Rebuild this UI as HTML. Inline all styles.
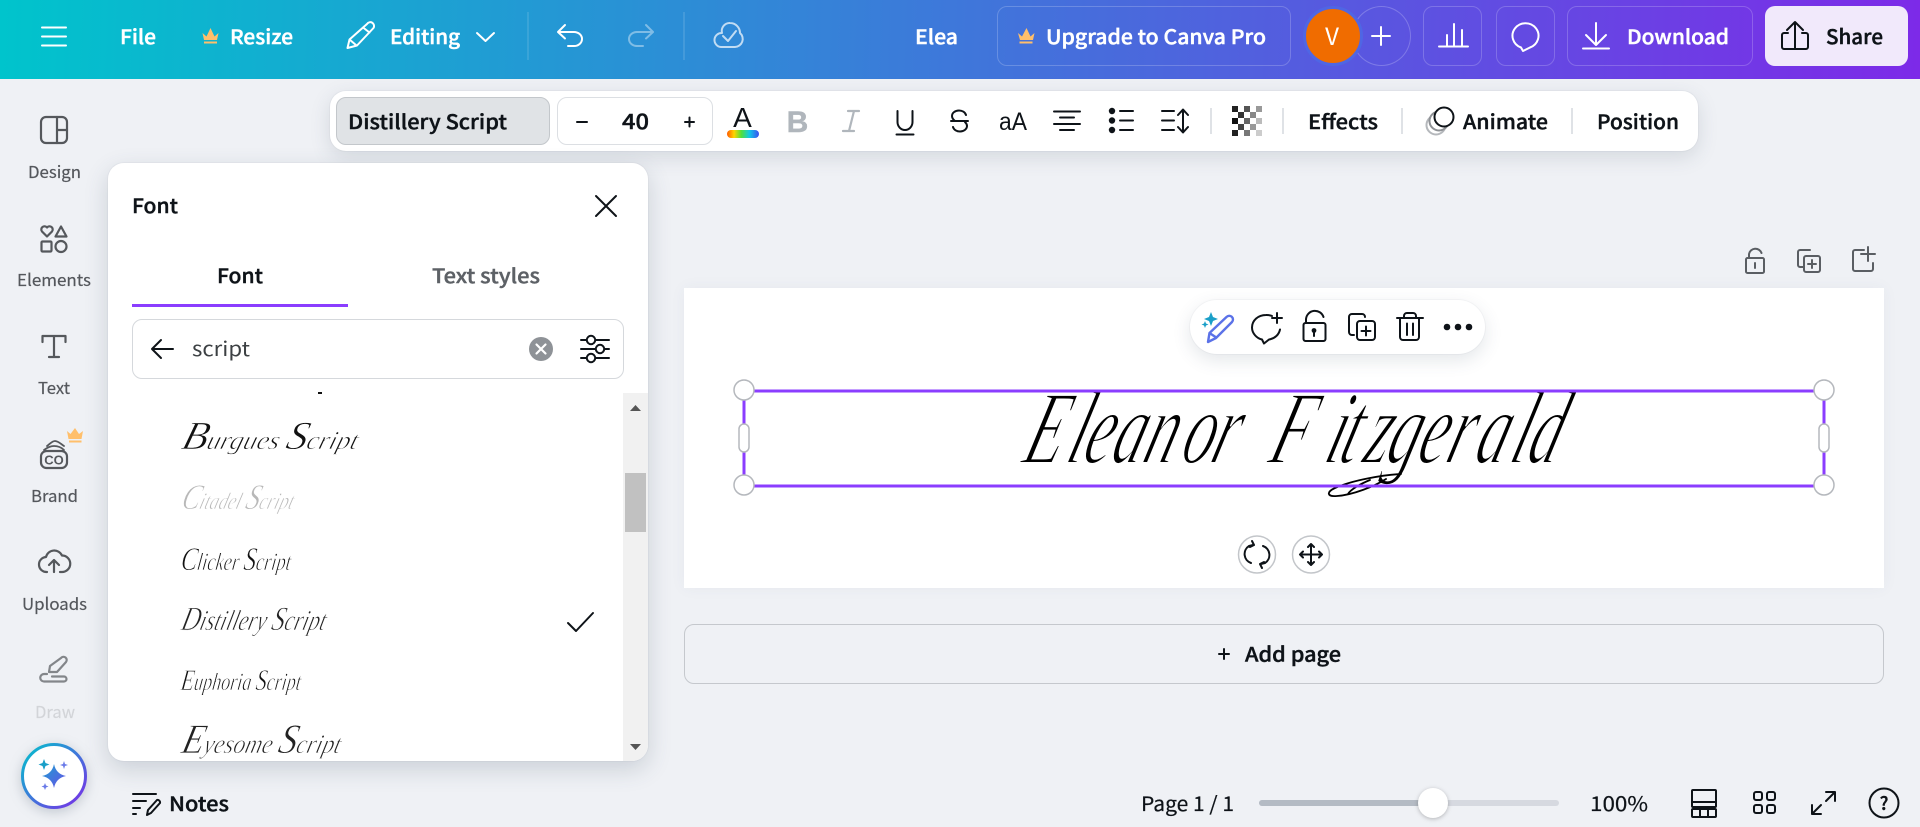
<!DOCTYPE html>
<html lang="en"><head><meta charset="utf-8"><title>Canva editor</title>
<style>
html,body{margin:0;padding:0;width:1920px;height:827px;overflow:hidden;background:#eff1f5}
.b{position:absolute;box-sizing:border-box}
svg{position:absolute;left:0;top:0}
text{font-family:"Noto Sans CJK JP","Liberation Sans",sans-serif;font-weight:500;fill:#0e1318;stroke:#0e1318;stroke-width:.4px}
.w text{fill:#fff;stroke:#fff;stroke-width:.45px}
.s text{font-size:16.5px;fill:#54575c;stroke:#54575c;stroke-width:.2px;font-weight:400}
.n{stroke:none}
text.sc{font-family:"Liberation Serif",serif;font-style:italic;font-weight:400;fill:#111;stroke:#fff;stroke-width:.7px}
.ic{fill:none;stroke:#0e1318;stroke-width:2;stroke-linecap:round;stroke-linejoin:round}
.iw{fill:none;stroke:#fff;stroke-width:2;stroke-linecap:round;stroke-linejoin:round}
.ig{fill:none;stroke:#55585c;stroke-width:2.2;stroke-linecap:round;stroke-linejoin:round}
</style></head><body>
<div class="b" style="left:0;top:0;width:1920px;height:79px;background:linear-gradient(92deg,#00c4cc,#7d2ae8)"></div>
<div class="b" style="left:997px;top:6px;width:294px;height:60px;border:1px solid rgba(255,255,255,.2);border-radius:10px"></div>
<div class="b" style="left:1352px;top:6px;width:59px;height:60px;border:1px solid rgba(255,255,255,.22);border-radius:50%"></div>
<div class="b" style="left:1303px;top:6px;width:60px;height:60px;border:3px solid #4f66e4;background:#f06c00;border-radius:50%"></div>
<div class="b" style="left:1423px;top:6px;width:59px;height:60px;border:1px solid rgba(255,255,255,.2);border-radius:10px"></div>
<div class="b" style="left:1496px;top:6px;width:59px;height:60px;border:1px solid rgba(255,255,255,.2);border-radius:10px"></div>
<div class="b" style="left:1567px;top:6px;width:186px;height:60px;border:1px solid rgba(255,255,255,.2);border-radius:10px"></div>
<div class="b" style="left:1765px;top:6px;width:143px;height:60px;background:#f1e9fb;border-radius:10px"></div>

<div class="b" style="left:684px;top:288px;width:1200px;height:300px;background:#fff;box-shadow:0 0 14px rgba(64,87,109,.05)"></div>
<div class="b" style="left:684px;top:624px;width:1200px;height:60px;border:1px solid #c5c8cd;border-radius:10px"></div>

<div class="b" style="left:330px;top:91px;width:1368px;height:60px;background:#fff;border-radius:16px;box-shadow:0 0 0 1px rgba(64,87,109,.04),0 6px 20px rgba(57,76,96,.15)"></div>
<div class="b" style="left:336px;top:97px;width:214px;height:48px;background:#e0e3e6;border:1px solid #c3c7cb;border-radius:10px"></div>
<div class="b" style="left:557px;top:97px;width:156px;height:48px;background:#fff;border:1px solid #dcdfe3;border-radius:10px"></div>

<svg width="1920" height="827" viewBox="0 0 1920 827" style="z-index:1">
<defs><linearGradient id="rb"><stop offset="0" stop-color="#ff5a00"/><stop offset=".22" stop-color="#ffd400"/><stop offset=".45" stop-color="#4fe03c"/><stop offset=".7" stop-color="#10c8e8"/><stop offset="1" stop-color="#3a50f0"/></linearGradient>
<linearGradient id="ring" x1="0" y1="0" x2="1" y2="1"><stop offset="0" stop-color="#00c4cc"/><stop offset="1" stop-color="#7d2ae8"/></linearGradient>
<linearGradient id="star" x1="0" y1="0" x2="1" y2="1"><stop offset="0" stop-color="#1a9fd0"/><stop offset="1" stop-color="#6a50e8"/></linearGradient>
<clipPath id="pc"><rect x="108" y="392" width="515" height="369"/></clipPath>
</defs>
<!-- header -->
<path class="iw" d="M42 27.500h24M42 36.500h24M42 45.500h24"/>
<g class="w">
<text x="120" y="44" font-size="20" textLength="36" lengthAdjust="spacingAndGlyphs">File</text>
<text x="230" y="44" font-size="20" textLength="63" lengthAdjust="spacingAndGlyphs">Resize</text>
<text x="390" y="44" font-size="20" textLength="70" lengthAdjust="spacingAndGlyphs">Editing</text>
<text x="915" y="44" font-size="20" textLength="43" lengthAdjust="spacingAndGlyphs">Elea</text>
<text x="1046" y="44" font-size="20" textLength="220" lengthAdjust="spacingAndGlyphs">Upgrade to Canva Pro</text>
<text x="1627" y="44" font-size="20" textLength="102" lengthAdjust="spacingAndGlyphs">Download</text>
<text x="1332" y="45" font-size="24" text-anchor="middle" style="font-weight:400;stroke:none">V</text>
</g>
<text x="1826" y="44" font-size="20" textLength="57" lengthAdjust="spacingAndGlyphs">Share</text>
<path fill="#ffbf6b" d="M202.500 33l4 3.500L210.500 28l4 8.500 4-3.500-1.500 7h-13zM204 41.500h13v2h-13z"/>
<path fill="#ffbf6b" d="M1018 33l4 3.500L1026.500 28l4 8.500 4-3.500-1.500 7h-13zM1019.500 41.500h13v2h-13z"/>
<path class="iw" d="M347.500 48l2-8.500L367 24a3.500 3.500 0 0 1 6.500 4L357 45.500zM349.500 39.500l7 6M363 27.500l6.500 5"/>
<path class="iw" d="M477 33l8.500 8 8.500-8"/>
<path stroke="rgba(255,255,255,.22)" d="M528 12v48M684 12v48"/>
<path class="iw" d="M565 25l-7 7 7 6.500M558 32h16a8 7 0 0 1 0 14h-6"/>
<path class="iw" opacity=".4" d="M646 25l7 7-7 6.500M653 32h-16a8 7 0 0 0 0 14h6"/>
<path class="iw" opacity=".7" stroke-width="1.800" d="M721 47h14a8 8 0 0 0 5-14A10 10 0 0 0 730 23a8 8 0 0 0-8 10 7 7 0 0 0-1 14zM723 36l5 5 8-10"/>
<path class="iw" d="M1381 27v18M1372 36h18"/>
<path class="iw" d="M1439 46.500h29M1447 46V35M1454 46V24M1462 46V30" stroke-width="1.800"/>
<path class="iw" d="M1521 47.500A13 12.500 0 1 1 1530 47.500L1523 51z"/>
<path class="iw" d="M1596 23v21M1586 35l10 10 10-10M1583 48.500h26"/>
<path class="ic" d="M1795 23v26M1787 30l8-8 8 8M1788 33h-4a2 2 0 0 0-2 2v12a2 2 0 0 0 2 2h22a2 2 0 0 0 2-2V35a2 2 0 0 0-2-2h-4"/>

<!-- toolbar -->
<text x="348" y="129" font-size="20" textLength="159" lengthAdjust="spacingAndGlyphs">Distillery Script</text>
<path class="ic" d="M577 122h10M685 122h9M689.500 117.500v9" stroke-width="2.200"/>
<text x="622" y="129" font-size="21" textLength="27" lengthAdjust="spacingAndGlyphs">40</text>
<text x="742.500" y="127" font-size="28" text-anchor="middle" class="n" style="font-family:'Liberation Sans';font-weight:400">A</text>
<rect x="727" y="130" width="32" height="8" rx="4" fill="url(#rb)"/>
<text x="797.500" y="132" font-size="30" text-anchor="middle" style="font-family:'Liberation Sans';font-weight:700;fill:#b0b6bc;stroke:#b0b6bc">B</text>
<path fill="none" stroke="#b0b6bc" stroke-width="2.200" stroke-linecap="round" d="M848 111h11M843 131h11M854 111l-5 20"/>
<path class="ic" d="M897.500 111v11a7.500 8 0 0 0 15 0v-11M896.500 134.500h17"/>
<path class="ic" d="M966 115c-1-3-4-4.500-7-4.500-4 0-7 2.500-7 5.500 0 2 1 3.500 3 5M953 127c1 3 4 4.500 7 4.500 4 0 7-2.500 7-5.500 0-2-1-3-2-4M951 121h17"/>
<text x="999" y="130" font-size="25" textLength="28" lengthAdjust="spacingAndGlyphs" class="n" style="font-family:'Liberation Sans';font-weight:400">aA</text>
<path class="ic" d="M1054 111.500h26M1060 117.500h14M1054 124h26M1060 130h14" stroke-linecap="butt"/>
<circle cx="1112" cy="111" r="3.200" fill="#0e1318"/><circle cx="1112" cy="120.500" r="3.200" fill="#0e1318"/><circle cx="1112" cy="130" r="3.200" fill="#0e1318"/>
<path class="ic" stroke-linecap="butt" stroke-width="1.800" d="M1120 111h13M1120 120.500h13M1120 130h13M1162 111h12M1162 120.500h12M1162 130h12M1183 110v22M1178 115l5-5.500 5 5.500M1178 127l5 5.500 5-5.500"/>
<path stroke="#dfe2e6" stroke-width="2" d="M1211 108v26M1283 108v26M1402 108v26M1572 108v26"/>
<g>
<rect x="1232" y="106" width="6" height="6" fill="#222"/><rect x="1244" y="106" width="6" height="6" fill="#555"/><rect x="1256" y="106" width="6" height="6" fill="#999"/>
<rect x="1238" y="112" width="6" height="6" fill="#333"/><rect x="1250" y="112" width="6" height="6" fill="#888"/>
<rect x="1232" y="118" width="6" height="6" fill="#111"/><rect x="1244" y="118" width="6" height="6" fill="#666"/><rect x="1256" y="118" width="6" height="6" fill="#bbb"/>
<rect x="1238" y="124" width="6" height="6" fill="#444"/><rect x="1250" y="124" width="6" height="6" fill="#999"/>
<rect x="1232" y="130" width="6" height="6" fill="#222"/><rect x="1244" y="130" width="6" height="6" fill="#777"/><rect x="1256" y="130" width="6" height="6" fill="#ccc"/>
</g>
<text x="1308" y="129" font-size="20" textLength="70" lengthAdjust="spacingAndGlyphs">Effects</text>
<circle cx="1436" cy="125" r="9.500" fill="#fff" stroke="#b5b8bc" stroke-width="2"/>
<circle cx="1439" cy="121" r="9.500" fill="#fff" stroke="#8f9296" stroke-width="2"/>
<circle cx="1444" cy="117" r="9.500" fill="#fff" stroke="#0e1318" stroke-width="2"/>
<text x="1463" y="129" font-size="20" textLength="85" lengthAdjust="spacingAndGlyphs">Animate</text>
<text x="1597" y="129" font-size="20" textLength="82" lengthAdjust="spacingAndGlyphs">Position</text>

<!-- sidebar -->
<g class="s">
<text x="28" y="178" textLength="53" lengthAdjust="spacingAndGlyphs">Design</text>
<text x="17" y="286" textLength="74" lengthAdjust="spacingAndGlyphs">Elements</text>
<text x="38" y="394" textLength="32" lengthAdjust="spacingAndGlyphs">Text</text>
<text x="31" y="502" textLength="47" lengthAdjust="spacingAndGlyphs">Brand</text>
<text x="22" y="610" textLength="65" lengthAdjust="spacingAndGlyphs">Uploads</text>
<text x="35" y="718" textLength="40" lengthAdjust="spacingAndGlyphs" opacity=".18">Draw</text>
</g>
<g class="ig">
<rect x="41" y="117" width="26" height="26" rx="5"/><path d="M57 117v26M57 130h10"/>
<path d="M47 236.500l-5-5a3.200 3.200 0 0 1 5-4 3.200 3.200 0 0 1 5 4zM61 226.500l5.500 10h-11z"/><rect x="41.500" y="241.500" width="10" height="10" rx="1"/><circle cx="61" cy="246.500" r="5.500"/>
<path d="M42.500 342v-6h23v6M54 336v21M49 357h10"/>
<rect x="41" y="451" width="26" height="17" rx="5.500"/>
<path d="M47 446c3-2 5-5 8-5s6 3 9 5M44 450c4-3 7-4 10-4s7 1 10 4" stroke-width="1.800"/>
<path d="M47 572a7.500 7.500 0 0 1-1-15 8.500 8.500 0 0 1 16-1.500 8 8 0 0 1 0 16.500h-2M54 572v-12M49 565l5-5 5 5"/>
</g>
<text x="54" y="464.500" font-size="13" text-anchor="middle" class="n" style="font-family:'Liberation Sans';font-weight:700;fill:#55585c">CO</text>
<path fill="#ffbf6b" d="M67 431l3.500 3 4.500-6 4 6 4-3-1.500 8H68.500zM69 440.500h12.500v2H69z"/>
<g class="ig" opacity=".7"><path d="M49 672l1-6 11-8a3 3 0 0 1 5 4l-9 10zM47 674h-3a3.500 3.500 0 0 0 0 7.500h20a2.500 2.500 0 0 0 0-5H52"/></g>

<!-- canvas icons -->
<g fill="none" stroke="#5a5e63" stroke-width="2" stroke-linecap="round" stroke-linejoin="round">
<rect x="1746" y="258" width="18" height="15" rx="1.500"/><path d="M1749 258v-4a6.500 6.500 0 0 1 12.500-1M1755 263v5"/>
<path d="M1803 267h-3a2 2 0 0 1-2-2v-13a2 2 0 0 1 2-2h10"/><rect x="1804" y="256" width="16" height="16" rx="2"/><path d="M1812 260v8M1808 264h8"/>
<path d="M1864 250h-9a2 2 0 0 0-2 2v17a2 2 0 0 0 2 2h16a2 2 0 0 0 2-2v-6M1868 247v14M1861 254h14"/>
</g>

<!-- canvas text -->
<text class="sc" y="0" font-size="104" transform="translate(0,463) skewX(-17) scale(.6,1)" x="1700 1773 1800 1847 1900 1963 2013 2083 2110 2203 2227 2267 2305 2357 2405 2453 2512 2540" style="stroke-width:2px;fill:#000">Eleanor Fitzgerald</text>
<path fill="none" stroke="#000" stroke-width="1.800" stroke-linecap="round" d="M1401 474c-18 1-48 6-66 14-9 4-8 9 2 8 16-1 38-10 49-17M1370 480c-10 4-20 10-22 14"/>

<!-- selection -->
<rect x="744" y="391" width="1080" height="95" fill="none" stroke="#8b3dff" stroke-width="3"/>
<g fill="#fff" stroke="#b5b8bd" stroke-width="1.500">
<circle cx="744" cy="390" r="10"/><circle cx="744" cy="485" r="10"/><circle cx="1824" cy="390" r="10"/><circle cx="1824" cy="485" r="10"/>
<rect x="739" y="424" width="10" height="28" rx="5"/><rect x="1819" y="424" width="10" height="28" rx="5"/>
<circle cx="1257" cy="554.500" r="18.500" stroke="#c3c6ca"/><circle cx="1311" cy="554.500" r="18.500" stroke="#c3c6ca"/>
</g>
<path class="ic" stroke-width="1.300" d="M1251 563a9.500 9.500 0 0 1-2-17l4-1M1252 541l2 4-4 2M1263 546a9.500 9.500 0 0 1 2 17l-4 1M1262 568l-2-4 4-2M1311 544v21M1300 554.500h22M1308 547l3-3 3 3M1308 562l3 3 3-3M1303 551.500l-3 3 3 3M1319 551.500l3 3-3 3"/>

<!-- notes/footer -->
<path class="ic" d="M133 794h23M133 801h13M133 808h7M133 814h3"/>
<path class="ic" d="M147 815l1-5 9-10a2.500 2.500 0 0 1 3 3l-9 10z" stroke-width="1.800"/>
<text x="169" y="811" font-size="20" textLength="60" lengthAdjust="spacingAndGlyphs">Notes</text>
<text x="1141" y="811" font-size="20" textLength="93" lengthAdjust="spacingAndGlyphs" style="font-weight:400;stroke-width:.2px">Page 1 / 1</text>
<text x="1590" y="811" font-size="20" textLength="58" lengthAdjust="spacingAndGlyphs" style="font-weight:400;stroke-width:.2px">100%</text>
<rect x="1259" y="800" width="300" height="6" rx="3" fill="#d6d9e0"/>
<rect x="1259" y="800" width="174" height="6" rx="3" fill="#b4bbc4"/>
<circle cx="1433" cy="803" r="15" fill="#fff" style="filter:drop-shadow(0 1px 2px rgba(0,0,0,.25))"/>
<g class="ic">
<rect x="1692" y="790" width="24" height="17" rx="1"/><path d="M1692 802h24"/>
<rect x="1692" y="809" width="24" height="8" rx="1"/><path d="M1700 809v8M1708 809v8"/>
<rect x="1754" y="792" width="8" height="8" rx="2"/><rect x="1767" y="792" width="8" height="8" rx="2"/><rect x="1754" y="805" width="8" height="8" rx="2"/><rect x="1767" y="805" width="8" height="8" rx="2"/>
<path d="M1826 792h9v9M1835 792l-9 9M1812 805v9h9M1812 814l9-9"/>
<circle cx="1884" cy="803" r="14.500"/>
</g>
<text x="1884" y="810" font-size="18" text-anchor="middle">?</text>
</svg>

<!-- font panel -->
<div class="b" style="left:108px;top:163px;width:540px;height:598px;background:#fff;border-radius:16px;box-shadow:0 0 0 1px rgba(64,87,109,.04),0 8px 24px rgba(57,76,96,.2);z-index:2;overflow:hidden">
<div class="b" style="left:515px;top:230px;width:25px;height:368px;background:#f1f1f1"></div>
<div class="b" style="left:517px;top:310px;width:21px;height:59px;background:#c1c1c1"></div>
</div>
<div class="b" style="left:132px;top:319px;width:492px;height:60px;border:1px solid #d5d8dc;border-radius:10px;z-index:2"></div>
<svg width="1920" height="827" viewBox="0 0 1920 827" style="z-index:3">
<text x="132" y="213" font-size="20" textLength="46" lengthAdjust="spacingAndGlyphs">Font</text>
<path class="ic" d="M596 196l20 20M616 196l-20 20"/>
<text x="217" y="283" font-size="20" textLength="46" lengthAdjust="spacingAndGlyphs">Font</text>
<text x="432" y="283" font-size="20" textLength="108" lengthAdjust="spacingAndGlyphs" style="fill:#5d6166;stroke:#5d6166">Text styles</text>
<rect x="132" y="304" width="216" height="3" fill="#8b3dff"/>
<path class="ic" d="M173 349h-21M161 340l-9 9 9 9"/>
<text x="192" y="356" font-size="20" textLength="58" lengthAdjust="spacingAndGlyphs" class="n" style="fill:#3c4043;font-weight:400">script</text>
<circle cx="541" cy="349" r="12" fill="#8e9297"/>
<path d="M536.500 344.500l9 9M545.500 344.500l-9 9" stroke="#fff" stroke-width="2.200" stroke-linecap="round"/>
<path class="ic" d="M581 340h5M596 340h13M581 349h14M605 349h4M581 358h5M596 358h13"/>
<circle cx="591" cy="340" r="4.200" fill="#fff" stroke="#0e1318" stroke-width="2"/><circle cx="600" cy="349" r="4.200" fill="#fff" stroke="#0e1318" stroke-width="2"/><circle cx="591" cy="358" r="4.200" fill="#fff" stroke="#0e1318" stroke-width="2"/>
<path fill="#555" d="M630 411l5.500-6 5.500 6zM630 744h11l-5.500 6z"/>
<rect x="318" y="392" width="4" height="2" fill="#111"/>
<g clip-path="url(#pc)">
<text class="sc" transform="translate(180,449) skewX(-16)" font-size="26" textLength="176" lengthAdjust="spacingAndGlyphs"><tspan font-size="40">B</tspan>urgues <tspan font-size="40">S</tspan>cript</text>
<text class="sc" transform="translate(180,509) skewX(-16)" font-size="24" textLength="112" lengthAdjust="spacingAndGlyphs" style="fill:#b8b8b8"><tspan font-size="36">C</tspan>itadel <tspan font-size="36">S</tspan>cript</text>
<text class="sc" transform="translate(180,570) skewX(-8)" font-size="25" textLength="110" lengthAdjust="spacingAndGlyphs"><tspan font-size="33">C</tspan>licker <tspan font-size="33">S</tspan>cript</text>
<text class="sc" transform="translate(180,630) skewX(-14)" font-size="29" textLength="144" lengthAdjust="spacingAndGlyphs" style="fill:#222"><tspan font-size="34">D</tspan>istillery <tspan font-size="34">S</tspan>cript</text>
<text class="sc" transform="translate(180,690) skewX(-8)" font-size="25" textLength="120" lengthAdjust="spacingAndGlyphs"><tspan font-size="30">E</tspan>uphoria <tspan font-size="30">S</tspan>cript</text>
<text class="sc" transform="translate(180,753) skewX(-14)" font-size="27" textLength="159" lengthAdjust="spacingAndGlyphs" style="fill:#222"><tspan font-size="42">E</tspan>yesome <tspan font-size="42">S</tspan>cript</text>
</g>
<path class="ic" d="M568 623l8 8 17-18"/>
</svg>

<!-- floating pill -->
<div class="b" style="left:1190px;top:300px;width:295px;height:54px;background:#fff;border-radius:27px;box-shadow:0 0 0 1px rgba(64,87,109,.04),0 6px 18px rgba(57,76,96,.14);z-index:4"></div>
<svg width="1920" height="827" viewBox="0 0 1920 827" style="z-index:5">
<path fill="#1a9fc8" d="M1211 312l2 5 5 2-5 2-2 5-2-5-5-2 5-2zM1205 321l1 2.500 2.500 1-2.500 1-1 2.500-1-2.500-2.500-1 2.500-1z"/>
<path fill="none" stroke="#5b72e8" stroke-width="2.400" stroke-linejoin="round" d="M1208 342l1.500-9 17-16a3.500 3.500 0 0 1 5.500 5l-16 16zM1209.500 333l7.500 5"/>
<path class="ic" d="M1272 316a13.500 12 0 0 0-6-1c-8 0-14 5.500-14 12.500 0 6 5 11 10 12l2 4 5-4c6-1 10-5 11-10M1277 313v10M1272 318h10"/>
<path class="ic" d="M1306 323v-4a9 9 0 0 1 17.500-2"/><rect x="1303.500" y="323" width="22" height="18" rx="2" fill="none" stroke="#0e1318" stroke-width="2"/>
<circle cx="1314" cy="330.500" r="2.400" fill="#0e1318"/><path class="ic" d="M1314 332v4"/>
<path class="ic" d="M1354 335h-2a3 3 0 0 1-3-3v-15a3 3 0 0 1 3-3h10a3 3 0 0 1 3 3"/><rect x="1357" y="321" width="18" height="19" rx="3" fill="none" stroke="#0e1318" stroke-width="2"/><path class="ic" d="M1366 326.500v9M1361.500 331h9"/>
<path class="ic" d="M1397 318h26M1404 318v-2a3 3 0 0 1 3-3h6a3 3 0 0 1 3 3v2M1400 318v19a3 3 0 0 0 3 3h13a3 3 0 0 0 3-3v-19M1407 323.500v11.500M1413 323.500v11.500"/>
<circle cx="1447" cy="327" r="3.300" fill="#0e1318"/><circle cx="1458" cy="327" r="3.300" fill="#0e1318"/><circle cx="1469" cy="327" r="3.300" fill="#0e1318"/>
<!-- add page -->
<path class="ic" d="M1224 649v10M1219 654h10"/>
<text x="1245" y="661.500" font-size="20" textLength="96" lengthAdjust="spacingAndGlyphs">Add page</text>
<!-- magic button -->
<circle cx="54" cy="776" r="31.500" fill="#fff" stroke="url(#ring)" stroke-width="3" style="filter:drop-shadow(0 3px 6px rgba(57,76,96,.25))"/>
<path fill="url(#star)" d="M54 764q2 10 12 12-10 2-12 12-2-10-12-12 10-2 12-12z"/>
<path fill="#1a9fc8" d="M44 759l1.500 4 4 1.500-4 1.500-1.500 4-1.500-4-4-1.500 4-1.500z"/>
<path fill="#6a7ae8" d="M64 761l1 3 3 1-3 1-1 3-1-3-3-1 3-1zM45 783l1 2.500 2.500 1-2.500 1-1 2.500-1-2.500-2.500-1 2.500-1z"/>
</svg>
</body></html>
